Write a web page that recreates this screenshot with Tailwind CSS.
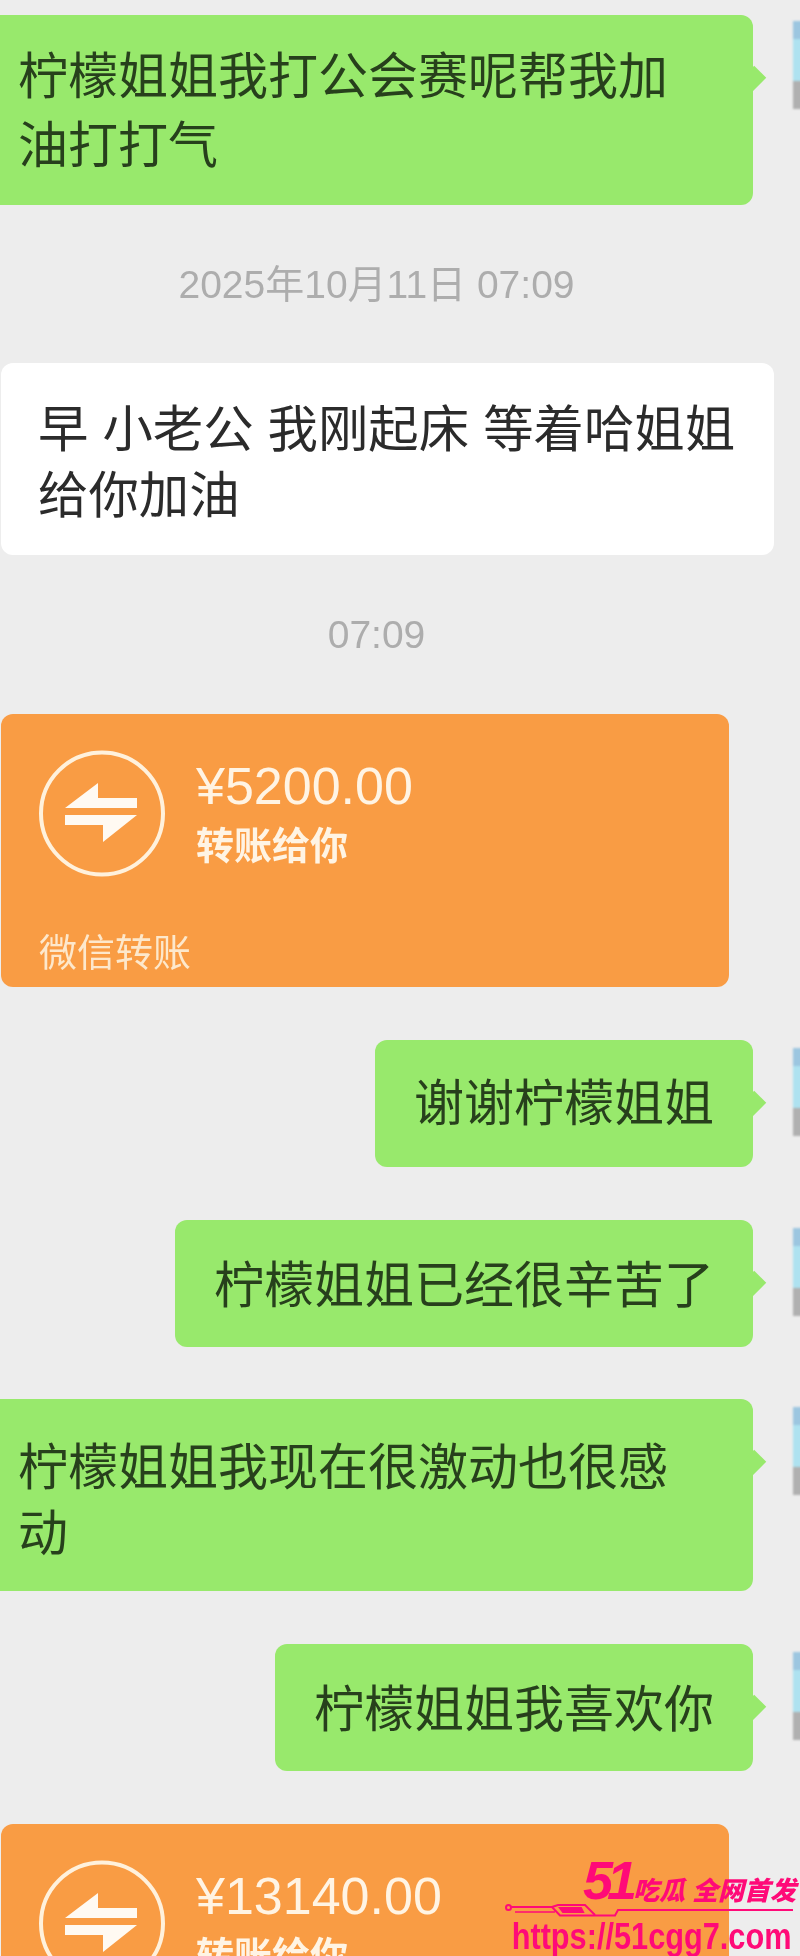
<!DOCTYPE html>
<html lang="zh-CN">
<head>
    <meta charset="UTF-8">
    <title>聊天记录</title>
    <script src="https://cdn.jsdelivr.net/npm/@tailwindcss/browser@4"></script>
</head>
<body class="bg-[#ededed]">
    <div class="relative w-[800px] h-[1956px] overflow-hidden bg-[#ededed] font-['Liberation_Sans','Noto_Sans_CJK_SC',sans-serif] text-[#2b2b2b]">
        <div class="flex flex-col pt-[15px] blur-[0.6px]">
            <!-- Sent: bubble 1 -->
            <div class="flex justify-end items-start gap-[40px] -mr-[73px]">
                <div class="relative shrink-0 w-[773px] rounded-[12px] bg-[#98e96c] pl-[38px] pr-[60px] pt-[28px] pb-[24px] text-[50px] leading-[69px] text-[#27401c]">
                    柠檬姐姐我打公会赛呢帮我加油打打气
                    <div class="absolute right-[-10px] top-[54px] w-[19px] h-[19px] rotate-45 scale-x-90 bg-[#98e96c]"></div>
                </div>
                <div class="shrink-0 w-[80px] mt-[6px] flex flex-col blur-[1px]">
                    <div class="h-[18px] bg-[#9cc6e0]"></div>
                    <div class="h-[42px] bg-[#aee2f0]"></div>
                    <div class="h-[28px] bg-[#b0b0b0]"></div>
                </div>
            </div>

            <p class="mt-[56px] text-center w-[753px] text-[39px] leading-[48px] text-[#adadad]">2025年10月11日 07:09</p>

            <!-- Received -->
            <div class="mt-[54px] ml-[1px] w-[773px] rounded-[12px] bg-white pl-[37px] pr-[26px] pt-[34px] pb-[26px] text-[50.4px] leading-[66px]">
                早 小老公 我刚起床 等着哈姐姐给你加油
            </div>

            <p class="mt-[56px] text-center w-[753px] text-[39px] leading-[48px] text-[#adadad]">07:09</p>

            <!-- Transfer card 1 -->
            <div class="mt-[55px] ml-[1px] w-[728px] h-[273px] rounded-[12px] bg-[#f99c44] text-[#fff4e4] flex flex-col">
                <div class="flex items-center pl-[37px] pt-[36px] gap-[30px]">
                    <svg class="w-[128px] h-[128px] shrink-0" viewBox="0 0 128 128">
                        <circle cx="64" cy="63.5" r="61" fill="none" stroke="#fff1dc" stroke-width="4"/>
                        <path d="M27 58 L60 33 L60 48 L99 48 L99 58 Z" fill="#fffaf2"/>
                        <path d="M27 65 L99 65 L65 92 L65 75 L27 75 Z" fill="#fffaf2"/>
                    </svg>
                    <div class="flex flex-col">
                        <span class="text-[52px] leading-[58px]">¥5200.00</span>
                        <span class="mt-[6px] text-[38px] leading-[50px] font-semibold">转账给你</span>
                    </div>
                </div>
                <span class="mt-[51px] pl-[38px] text-[38px] leading-[48px] text-[#fde8cc]">微信转账</span>
            </div>

            <div class="flex justify-end items-start gap-[40px] -mr-[73px] mt-[53px]">
                <div class="relative shrink-0 rounded-[12px] bg-[#98e96c] px-[39px] pt-[31px] pb-[29px] text-[50px] leading-[67px] text-[#27401c]">
                    谢谢柠檬姐姐
                    <div class="absolute right-[-10px] top-[54px] w-[19px] h-[19px] rotate-45 scale-x-90 bg-[#98e96c]"></div>
                </div>
                <div class="shrink-0 w-[80px] mt-[8px] flex flex-col blur-[1px]">
                    <div class="h-[18px] bg-[#9cc6e0]"></div>
                    <div class="h-[42px] bg-[#aee2f0]"></div>
                    <div class="h-[28px] bg-[#b0b0b0]"></div>
                </div>
            </div>

            <div class="flex justify-end items-start gap-[40px] -mr-[73px] mt-[53px]">
                <div class="relative shrink-0 rounded-[12px] bg-[#98e96c] px-[39px] pt-[33px] pb-[27px] text-[50px] leading-[67px] text-[#27401c]">
                    柠檬姐姐已经很辛苦了
                    <div class="absolute right-[-10px] top-[54px] w-[19px] h-[19px] rotate-45 scale-x-90 bg-[#98e96c]"></div>
                </div>
                <div class="shrink-0 w-[80px] mt-[8px] flex flex-col blur-[1px]">
                    <div class="h-[18px] bg-[#9cc6e0]"></div>
                    <div class="h-[42px] bg-[#aee2f0]"></div>
                    <div class="h-[28px] bg-[#b0b0b0]"></div>
                </div>
            </div>

            <div class="flex justify-end items-start gap-[40px] -mr-[73px] mt-[52px]">
                <div class="relative shrink-0 w-[773px] rounded-[12px] bg-[#98e96c] pl-[38px] pr-[60px] pt-[36px] pb-[24px] text-[50px] leading-[66px] text-[#27401c]">
                    柠檬姐姐我现在很激动也很感动
                    <div class="absolute right-[-10px] top-[54px] w-[19px] h-[19px] rotate-45 scale-x-90 bg-[#98e96c]"></div>
                </div>
                <div class="shrink-0 w-[80px] mt-[8px] flex flex-col blur-[1px]">
                    <div class="h-[18px] bg-[#9cc6e0]"></div>
                    <div class="h-[42px] bg-[#aee2f0]"></div>
                    <div class="h-[28px] bg-[#b0b0b0]"></div>
                </div>
            </div>

            <div class="flex justify-end items-start gap-[40px] -mr-[73px] mt-[53px]">
                <div class="relative shrink-0 rounded-[12px] bg-[#98e96c] px-[39px] pt-[33px] pb-[27px] text-[50px] leading-[67px] text-[#27401c]">
                    柠檬姐姐我喜欢你
                    <div class="absolute right-[-10px] top-[54px] w-[19px] h-[19px] rotate-45 scale-x-90 bg-[#98e96c]"></div>
                </div>
                <div class="shrink-0 w-[80px] mt-[8px] flex flex-col blur-[1px]">
                    <div class="h-[18px] bg-[#9cc6e0]"></div>
                    <div class="h-[42px] bg-[#aee2f0]"></div>
                    <div class="h-[28px] bg-[#b0b0b0]"></div>
                </div>
            </div>

            <!-- Transfer card 2, cut off by the bottom edge -->
            <div class="mt-[53px] ml-[1px] w-[728px] h-[273px] shrink-0 rounded-[12px] bg-[#f99c44] text-[#fff4e4] flex flex-col">
                <div class="flex items-center pl-[37px] pt-[36px] gap-[30px]">
                    <svg class="w-[128px] h-[128px] shrink-0" viewBox="0 0 128 128">
                        <circle cx="64" cy="63.5" r="61" fill="none" stroke="#fff1dc" stroke-width="4"/>
                        <path d="M27 58 L60 33 L60 48 L99 48 L99 58 Z" fill="#fffaf2"/>
                        <path d="M27 65 L99 65 L65 92 L65 75 L27 75 Z" fill="#fffaf2"/>
                    </svg>
                    <div class="flex flex-col">
                        <span class="text-[52px] leading-[58px]">¥13140.00</span>
                        <span class="mt-[6px] text-[38px] leading-[50px] font-semibold">转账给你</span>
                    </div>
                </div>
            </div>
        </div>

        <!-- Watermark over the corner -->
        <div class="absolute left-[505px] top-[1858px] w-[295px] h-[98px] text-[#ff0a78]">
            <div class="flex items-end pl-[78px] h-[46px] italic font-black whitespace-nowrap">
                <span class="text-[54px] leading-[48px] tracking-[-6px]">51</span>
                <span class="text-[26px] leading-[26px] ml-[2px]">吃瓜</span>
                <span class="text-[26px] leading-[26px] ml-[7px]">全网首发</span>
            </div>
            <svg class="block w-[295px] h-[16px]" viewBox="0 0 295 16" fill="none" stroke="#ff0a78" stroke-width="2">
                <circle cx="3.5" cy="3.5" r="2.5"/>
                <path d="M6 3 H47 L55 11.5 H110 L113 6 H288"/>
                <path d="M47 3 L53 1 H80 L90 11"/>
                <path d="M10 8 H50" stroke-width="1.5"/>
                <path d="M55 4 H76 L78 8 H58 Z" fill="#ff0a78"/>
            </svg>
            <p class="w-[340px] text-[37px] leading-[34px] font-bold origin-left scale-x-[.83] whitespace-nowrap pl-[8px]">https://51cgg7.com</p>
        </div>
    </div>
</body>
</html>
